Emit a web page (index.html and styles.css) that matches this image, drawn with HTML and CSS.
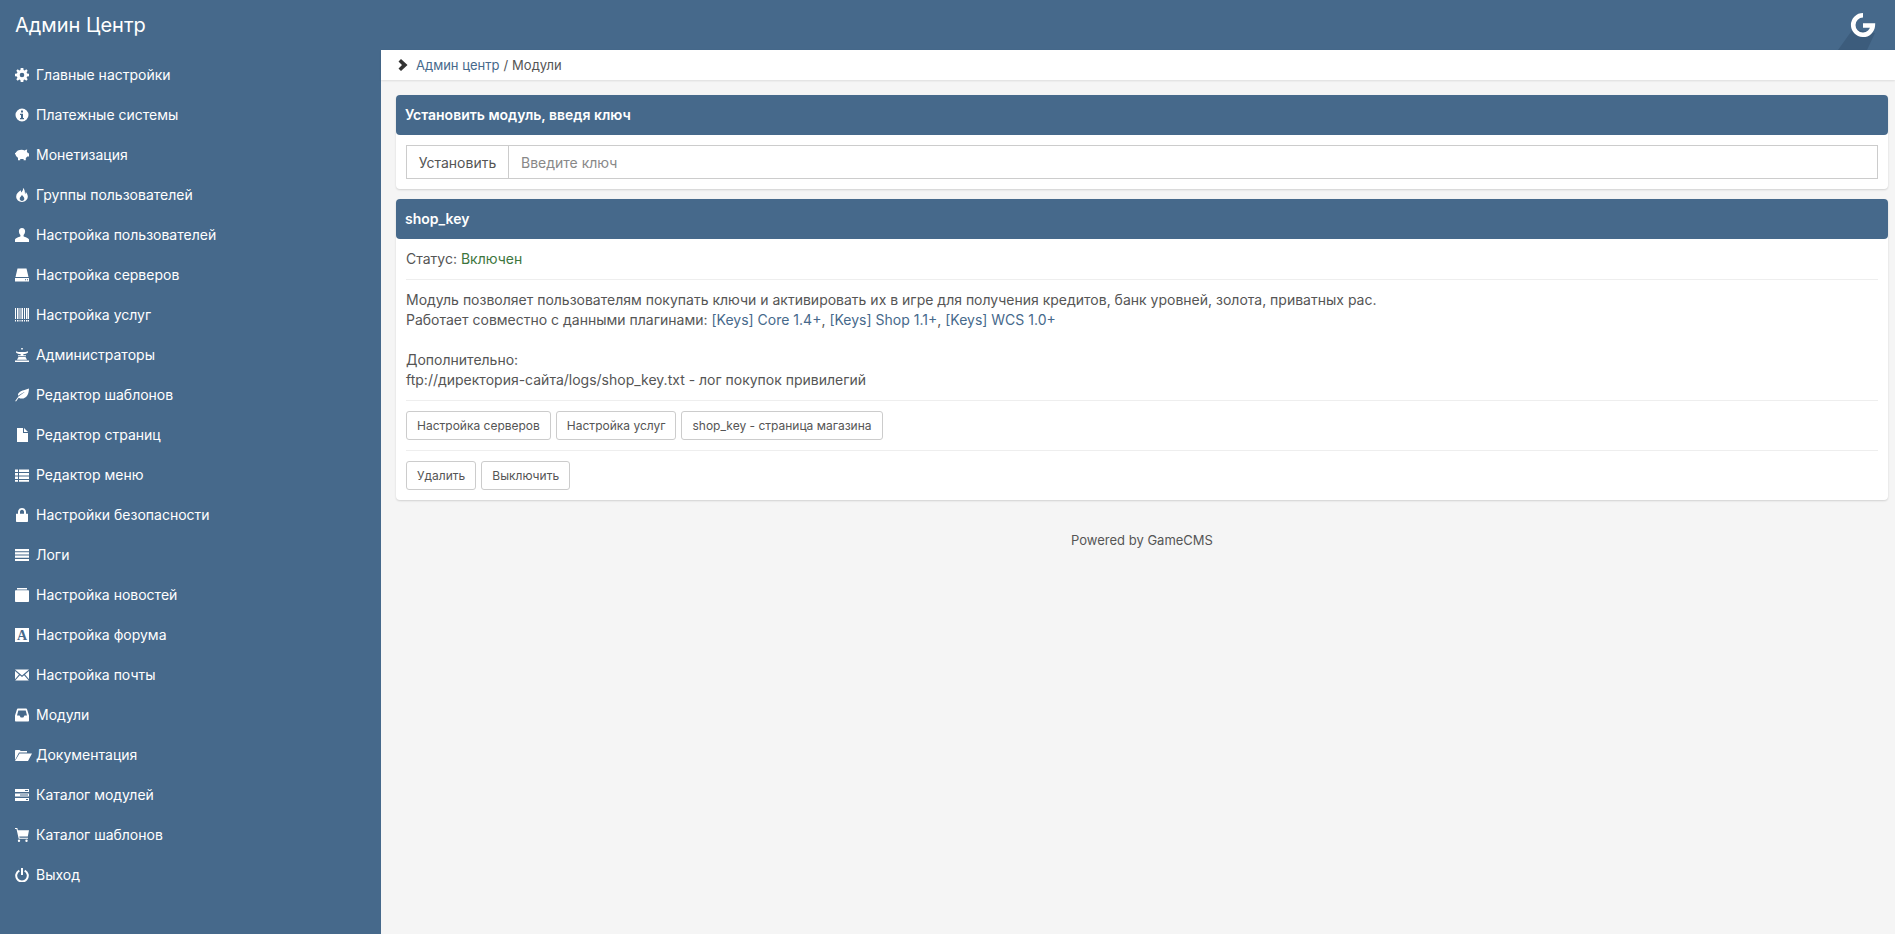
FILE: index.html
```html
<!DOCTYPE html>
<html lang="ru">
<head>
    <meta charset="UTF-8">
    <meta name="viewport" content="width=device-width, initial-scale=1.0">
    <title>Админ Центр</title>
    <link rel="stylesheet" href="styles.css">
</head>
<body>
    <svg class="sprite" xmlns="http://www.w3.org/2000/svg">
        <symbol id="i-cog" viewBox="0 0 14 14"><path fill-rule="evenodd" d="M5.700 0h2.600l.3 1.900 1.100.5 1.600-1.100 1.400 1.400-1.100 1.600.5 1.100 1.900.3v2.600l-1.900.3-.5 1.100 1.100 1.600-1.400 1.400-1.600-1.100-1.100.5-.3 1.900H5.700l-.3-1.900-1.100-.5-1.600 1.100-1.400-1.400 1.100-1.600-.5-1.100L0 8.300V5.700l1.900-.3.5-1.100-1.100-1.600 1.400-1.400 1.600 1.100 1.100-.5zM7 4.700a2.300 2.300 0 1 0 0 4.600 2.300 2.300 0 0 0 0-4.600z"/></symbol>
        <symbol id="i-info" viewBox="0 0 14 14"><path fill-rule="evenodd" d="M7 .5a6.500 6.500 0 1 1 0 13 6.500 6.500 0 0 1 0-13zM6 2.500v2h2v-2zM5 5.800V7h1v3H5v1.300h4V10H8V5.800z"/></symbol>
        <symbol id="i-piggy" viewBox="0 0 14 14"><path d="M-1 4.800c.5.400 1 .5 1.500.3C1.500 3 3.700 1.800 6.700 1.800c1.100 0 2.100.2 3 .6.800-.6 1.600-.9 2.500-.9l-.3 2.300c.5.400.8.900 1 1.500H14v3.100h-1.700c-.4.600-.9 1.100-1.500 1.500v2.300H8.600v-1.300H5.200v1.300H3V9.800C1.500 8.900.5 7.500.3 6-.4 6-1.100 5.500-1 4.800z"/></symbol>
        <symbol id="i-fire" viewBox="0 0 14 14"><path fill-rule="evenodd" d="M7.800-.3c.8 2.300-.5 3.500-1.300 4.700-.5-.6-.7-1.300-.6-2.100C3.300 3.700 1.200 5.800 1.200 8.600 1.200 11.800 3.800 14 7 14s5.800-2.300 5.800-5.400c0-1.800-.8-3.400-2.100-4.700.1 1-.1 1.700-.7 2.300C10 3.800 9.800 1.300 7.800-.3zM7 6.800c.4 1.400 2.300 2 2.300 4 0 1.300-1 2.200-2.300 2.200s-2.300-.9-2.300-2.200c0-1.800 1.800-2.500 2.300-4z"/></symbol>
        <symbol id="i-user" viewBox="0 0 14 14"><path d="M7 0c2 0 3.100 1.500 3.100 3.300 0 1.500-.7 3-1.500 3.800v1.100c0 .6 4.400 1.100 5.400 3.300V14H0v-2.500c1-2.200 5.400-2.700 5.400-3.300V7.100c-.8-.8-1.500-2.300-1.500-3.800C3.900 1.500 5 0 7 0z"/></symbol>
        <symbol id="i-hdd" viewBox="0 0 14 14"><path fill-rule="evenodd" d="M2.500.5h9L13.500 9h-13zM0 10h14v3.500H0zM10 11.300v1h1v-1zM12 11.300v1h1v-1z"/></symbol>
        <symbol id="i-barcode" viewBox="0 0 14 14"><path d="M0 0h1v11H0zM2 0h1.500v11H2zM4.500 0h1v11h-1zM6.500 0H8v11H6.500zM9 0h1v11H9zM11 0h1.500v11H11zM13 0h1v11h-1zM0 12h1v1.500H0zM2 12h1.500v1.500H2zM4.500 12h1v1.500h-1zM6.500 12H8v1.500H6.500zM9 12h1v1.500H9zM11 12h1.500v1.500H11zM13 12h1v1.500h-1z"/></symbol>
        <symbol id="i-tower" viewBox="0 0 14 14"><path d="M6.200 0h1.600v1.600H6.200zM1 3.200c2 .6 3.500.9 6 .9s4-.3 6-.9v1.200c-1.300 1-2.800 1.500-4.600 1.700v1.200H11v1H3v-1h2.600V6.100C3.800 5.900 2.300 5.400 1 4.400zM3.500 9h7L12 11.800H2zM0 12.500h14V14H0z"/></symbol>
        <symbol id="i-leaf" viewBox="0 0 14 14"><path d="M14 .5c-.3 4.800-1.400 8.800-5.600 9.900-1.900.5-3.500.1-4.700-.7L1 13.600.2 13l3.200-4.500 6-4.300-.2-.3-6.200 3.900C2.300 3.800 7.800 2.400 14 .5z"/></symbol>
        <symbol id="i-file" viewBox="0 0 14 14"><path d="M2 0h6v5h5v9H2zM9 0l4 4H9z"/></symbol>
        <symbol id="i-thlist" viewBox="0 0 14 14"><path d="M0 1.500h3v2.400H0zM4 1.500h10v2.400H4zM0 5h3v2.400H0zM4 5h10v2.400H4zM0 8.500h3v2.400H0zM4 8.500h10v2.400H4zM0 12h3v1.800H0zM4 12h10v1.800H4z"/></symbol>
        <symbol id="i-lock" viewBox="0 0 14 14"><path fill-rule="evenodd" d="M7 0c2.500 0 4 1.700 4 4v1.800h1.500c.5 0 .5.300.5.500V13c0 .7-.4 1-1 1H2c-.6 0-1-.3-1-1V6.300c0-.2 0-.5.500-.5H3V4c0-2.300 1.500-4 4-4zm0 1.800C5.700 1.800 5 2.800 5 4v1.800h4V4c0-1.200-.7-2.200-2-2.200z"/></symbol>
        <symbol id="i-lines" viewBox="0 0 14 14"><path d="M0 1h14v2.200H0zM0 4.300h14v2.200H0zM0 7.600h14v2.200H0zM0 10.900h14v2.200H0z"/></symbol>
        <symbol id="i-folder" viewBox="0 0 14 14"><path d="M2 0h10v1.400H2zM1 2.200h12c.6 0 1 .4 1 1V13c0 .6-.4 1-1 1H1c-.6 0-1-.4-1-1V3.200c0-.6.4-1 1-1z"/></symbol>
        <symbol id="i-textbg" viewBox="0 0 14 14"><rect width="14" height="14"/><text class="icon-letter" x="7" y="11.800" text-anchor="middle">A</text></symbol>
        <symbol id="i-mail" viewBox="0 0 14 14"><path d="M0 1.500h14L7 7.500zM0 2.900l4 3.500-4 4.800zM14 2.900v8.300l-4-4.800zM4.900 7.200 7 9l2.100-1.800 4.700 5.300H.2z"/></symbol>
        <symbol id="i-inbox" viewBox="0 0 14 14"><path fill-rule="evenodd" d="M3 .5h8c.6 0 1 .4 1.100 1L14 7.500v5c0 .6-.4 1-1 1H1c-.6 0-1-.4-1-1v-5l1.900-6C2 .9 2.400.5 3 .5zm.3 2L2 7.500h2.500l1.200 2h2.600l1.200-2H12l-1.300-5z"/></symbol>
        <symbol id="i-open" viewBox="0 0 17 14"><path d="M0 12V3c0-.6.4-1 1-1h3.500l1.300 1H12v1.500H4zM4.500 5.500H17L13 13H0z"/></symbol>
        <symbol id="i-tasks" viewBox="0 0 14 14"><path fill-rule="evenodd" d="M0 1h14v3H0zM0 5.500h14v3H0zM0 10h14v3H0zM10 2v1h3V2zM5 6.500v1h8v-1zM11 11v1h2v-1z"/></symbol>
        <symbol id="i-cart" viewBox="0 0 14 14"><path d="M0 0h2.300l.6 2.300H14l-1.200 6.200H4.300l.3 1.200h8.400v1.100H3.700L1.500 1.100H0zM4 11.500a1.200 1.200 0 1 1 0 2.400 1.200 1.200 0 0 1 0-2.400zm7.500 0a1.200 1.200 0 1 1 0 2.400 1.200 1.200 0 0 1 0-2.400z"/></symbol>
        <symbol id="i-off" viewBox="0 0 14 14"><path d="M6 0h2v7H6zM3.800 1.700l1 1.700a4.800 4.800 0 1 0 4.400 0l1-1.700a6.800 6.800 0 1 1-6.400 0z"/></symbol>
    </svg>

    <header class="topbar">
        <a class="brand" href="#">Админ Центр</a>
        <div class="logo">
            <svg viewBox="0 0 62 50" width="62" height="50">
                <path class="logo-shadow" d="M16 50 31 29l22 4-8 17z"/>
                <path class="logo-g" d="M41 15.200a9.800 9.800 0 1 0 9.800 10.300H41"/>
            </svg>
        </div>
    </header>

    <div class="layout">
        <nav class="sidebar">
            <a class="nav-item" href="#"><svg class="icon"><use href="#i-cog"/></svg>Главные настройки</a>
            <a class="nav-item" href="#"><svg class="icon"><use href="#i-info"/></svg>Платежные системы</a>
            <a class="nav-item" href="#"><svg class="icon"><use href="#i-piggy"/></svg>Монетизация</a>
            <a class="nav-item" href="#"><svg class="icon"><use href="#i-fire"/></svg>Группы пользователей</a>
            <a class="nav-item" href="#"><svg class="icon"><use href="#i-user"/></svg>Настройка пользователей</a>
            <a class="nav-item" href="#"><svg class="icon"><use href="#i-hdd"/></svg>Настройка серверов</a>
            <a class="nav-item" href="#"><svg class="icon"><use href="#i-barcode"/></svg>Настройка услуг</a>
            <a class="nav-item" href="#"><svg class="icon"><use href="#i-tower"/></svg>Администраторы</a>
            <a class="nav-item" href="#"><svg class="icon"><use href="#i-leaf"/></svg>Редактор шаблонов</a>
            <a class="nav-item" href="#"><svg class="icon"><use href="#i-file"/></svg>Редактор страниц</a>
            <a class="nav-item" href="#"><svg class="icon"><use href="#i-thlist"/></svg>Редактор меню</a>
            <a class="nav-item" href="#"><svg class="icon"><use href="#i-lock"/></svg>Настройки безопасности</a>
            <a class="nav-item" href="#"><svg class="icon"><use href="#i-lines"/></svg>Логи</a>
            <a class="nav-item" href="#"><svg class="icon"><use href="#i-folder"/></svg>Настройка новостей</a>
            <a class="nav-item" href="#"><svg class="icon"><use href="#i-textbg"/></svg>Настройка форума</a>
            <a class="nav-item" href="#"><svg class="icon"><use href="#i-mail"/></svg>Настройка почты</a>
            <a class="nav-item" href="#"><svg class="icon"><use href="#i-inbox"/></svg>Модули</a>
            <a class="nav-item" href="#"><svg class="icon icon-wide"><use href="#i-open"/></svg>Документация</a>
            <a class="nav-item" href="#"><svg class="icon"><use href="#i-tasks"/></svg>Каталог модулей</a>
            <a class="nav-item" href="#"><svg class="icon"><use href="#i-cart"/></svg>Каталог шаблонов</a>
            <a class="nav-item" href="#"><svg class="icon"><use href="#i-off"/></svg>Выход</a>
        </nav>

        <main class="main">
            <div class="breadcrumb">
                <svg class="crumb-arrow" viewBox="0 0 10 12" width="10" height="12"><path d="M3 0l6.500 6L3 12 .5 9.500 4 6 .5 2.500z"/></svg>
                <a href="#">Админ центр</a><span class="crumb-sep">/</span>Модули
            </div>

            <div class="content">
                <section class="panel">
                    <h2 class="panel-heading">Установить модуль, введя ключ</h2>
                    <div class="panel-body">
                        <div class="input-group">
                            <button class="addon">Установить</button>
                            <input class="key-input" type="text" placeholder="Введите ключ">
                        </div>
                    </div>
                </section>

                <section class="panel">
                    <h2 class="panel-heading">shop_key</h2>
                    <div class="panel-body">
                        <p>Статус: <span class="status-on">Включен</span></p>
                        <hr>
                        <p>
                            Модуль позволяет пользователям покупать ключи и активировать их в игре для получения кредитов, банк уровней, золота, приватных рас.<br>
                            Работает совместно с данными плагинами: <a href="#">[Keys] Core 1.4+</a>, <a href="#">[Keys] Shop 1.1+</a>, <a href="#">[Keys] WCS 1.0+</a><br>
                            <br>
                            Дополнительно:<br>
                            ftp://директория-сайта/logs/shop_key.txt - лог покупок привилегий
                        </p>
                        <hr>
                        <div class="button-row">
                            <a class="btn" href="#">Настройка серверов</a>
                            <a class="btn" href="#">Настройка услуг</a>
                            <a class="btn" href="#">shop_key - страница магазина</a>
                        </div>
                        <hr>
                        <div class="button-row">
                            <a class="btn" href="#">Удалить</a>
                            <a class="btn" href="#">Выключить</a>
                        </div>
                    </div>
                </section>

                <footer class="footer">Powered by GameCMS</footer>
            </div>
        </main>
    </div>
</body>
</html>
```

FILE: styles.css
```css
* {
    box-sizing: border-box;
}

body {
    font-family: Inter, "Noto Sans", sans-serif;
    font-size: 14px;
    line-height: 20px;
    margin: 0;
    color: #555;
    background-color: #f5f5f5;
}

a {
    color: #46698b;
    text-decoration: none;
}

.sprite {
    display: none;
}

.topbar {
    display: flex;
    justify-content: space-between;
    align-items: center;
    height: 50px;
    padding-left: 15px;
    background-color: #46698b;
    overflow: hidden;
}

.brand {
    color: #fff;
    font-size: 20px;
}

.logo {
    display: flex;
    height: 50px;
    margin-right: 11px;
}

.logo-shadow {
    fill: #3c5c7c;
}

.logo-g {
    fill: none;
    stroke: #fff;
    stroke-width: 4.6;
}

.layout {
    display: grid;
    grid-template-columns: 381px 1fr;
    min-height: 884px;
}

.sidebar {
    display: flex;
    flex-direction: column;
    padding-top: 5px;
    background-color: #46698b;
}

.nav-item {
    display: flex;
    align-items: center;
    gap: 7px;
    height: 40px;
    padding-left: 15px;
    color: #fff;
}

.icon {
    flex: none;
    width: 14px;
    height: 14px;
    fill: #fff;
    overflow: visible;
}

.icon-wide {
    width: 17px;
    margin-right: -3px;
}

.icon-letter {
    fill: #46698b;
    font-family: "Liberation Serif", serif;
    font-size: 14px;
    font-weight: bold;
}

.breadcrumb {
    display: flex;
    align-items: center;
    height: 30px;
    padding-left: 17px;
    font-size: 13px;
    color: #555;
    background-color: #fff;
    box-shadow: 0 1px 2px rgba(0,0,0,0.1);
}

.crumb-arrow {
    margin-right: 8px;
    fill: #333;
}

.crumb-sep {
    margin: 0 4px;
}

.content {
    padding: 15px 7px 0 15px;
}

.panel {
    margin-bottom: 10px;
    background: #fff;
    border-radius: 4px;
    box-shadow: 0 1px 2px rgba(0,0,0,0.15);
}

.panel-heading {
    height: 40px;
    margin: 0;
    padding: 0 9px;
    color: #fff;
    font-size: 14px;
    font-weight: 600;
    line-height: 40px;
    background-color: #46698b;
    border-radius: 4px;
}

.panel-body {
    padding: 10px;
}

.panel-body p {
    margin: 0;
}

hr {
    height: 1px;
    margin: 10px 0;
    border: none;
    background-color: #eee;
}

.status-on {
    color: #3c763d;
}

.input-group {
    display: flex;
    height: 34px;
    border: 1px solid #ccc;
}

.addon {
    width: 102px;
    padding: 0;
    color: #555;
    font-family: inherit;
    font-size: 14px;
    background: #fff;
    border: none;
    border-right: 1px solid #ccc;
}

.key-input {
    flex: 1;
    padding: 0 12px;
    color: #555;
    font-family: inherit;
    font-size: 14px;
    border: none;
}

.key-input::placeholder {
    color: #888;
}

.button-row {
    display: flex;
    gap: 5px;
}

.btn {
    padding: 4px 10px;
    color: #555;
    font-size: 12px;
    line-height: 19px;
    background: #fff;
    border: 1px solid #ccc;
    border-radius: 3px;
}

.footer {
    padding: 20px 0;
    font-size: 13px;
    text-align: center;
}
```
